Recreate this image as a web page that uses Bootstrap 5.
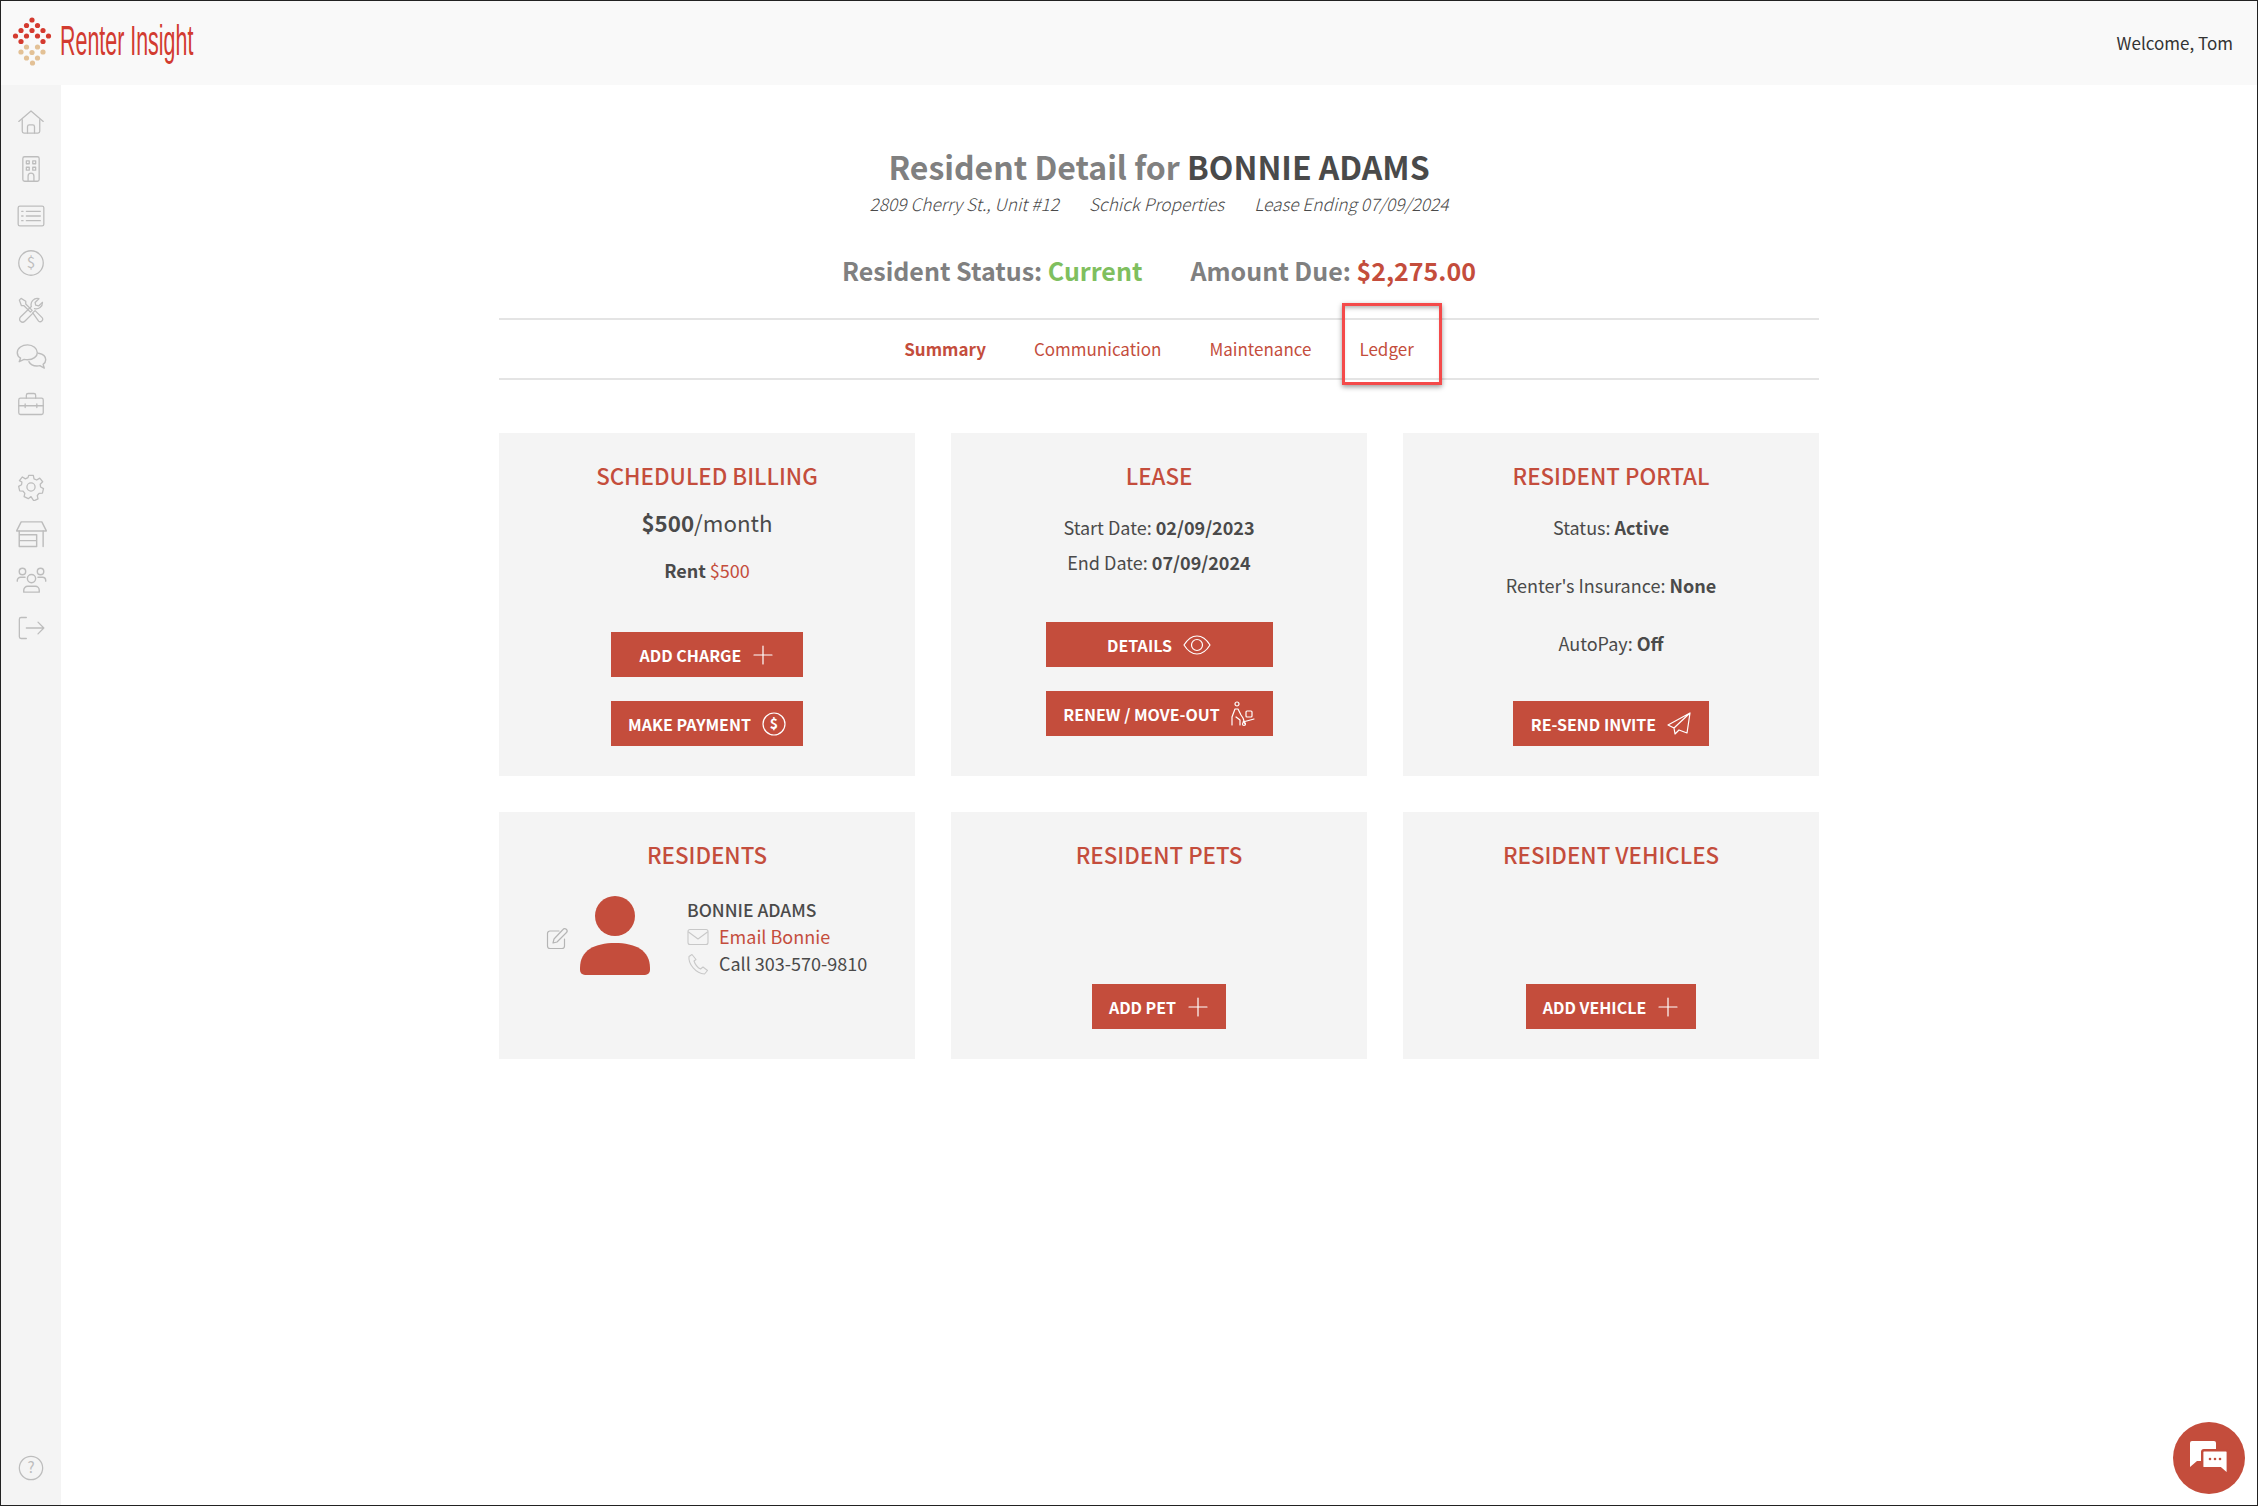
<!DOCTYPE html>
<html lang="en">
<head>
    <meta charset="UTF-8">
    <title>Resident Detail</title>
    <link href="https://cdn.jsdelivr.net/npm/bootstrap@5.3.0/dist/css/bootstrap.min.css" rel="stylesheet">
    <style>
        html, body { height: 100%; }
        body { font-family: "Noto Sans CJK SC", "Noto Sans", sans-serif; color: #4a4a4a; background: #fff; overflow: hidden; }
        .app-frame { height: 1506px; border: 1px solid #222; position: relative; display: flex; flex-direction: column; }
        .top-bar { height: 84px; background: #f9f9f9; padding: 0 24px 4px 11px; flex: none; }
        .logo-text { font-family: "Liberation Sans", sans-serif; font-size: 42px; line-height: 1; color: #d23b30; transform: scaleX(.51); transform-origin: left center; white-space: nowrap; margin-left: 8px; width: 134px; }
        .welcome { font-size: 17px; color: #333; margin-top: 4px; }
        .side-bar { width: 60px; background: #f4f4f4; flex: none; padding-top: 13px; }
        .side-item { height: 47px; display: flex; align-items: center; justify-content: center; }
        .side-gap { height: 36px; }
        .side-bar svg { width: 28px; height: 28px; fill: none; stroke: #bdbdbd; stroke-width: 1.1; stroke-linecap: round; stroke-linejoin: round; }
        .side-bar svg.wide-ico { width: 31px; height: 31px; }
        .help-item { margin-bottom: 14px; }
        .page-body { width: 1320px; margin: 0 auto; padding-top: 58px; }
        .page-title { font-size: 32px; line-height: 46px; font-weight: 600; color: #808080; margin: 0; }
        .page-title b { color: #4a4a4a; font-weight: 700; }
        .sub-info { font-size: 17.300px; font-style: italic; font-weight: 300; line-height: 26px; margin-top: 2px; color: #4a4a4a; gap: 30px; }
        .status-row { font-size: 25px; line-height: 38px; font-weight: 600; color: #808080; margin-top: 34px; gap: 48px; }
        .txt-green { color: #7fbf5f; }
        .txt-red { color: #c44d3c; }
        .tab-bar { margin-top: 29px; border-top: 2px solid #e4e4e4; border-bottom: 2px solid #e4e4e4; height: 62px; }
        .tab-bar .nav-link { color: #c44d3c; font-size: 17px; line-height: 58px; padding: 0 24px; }
        .tab-bar .nav-link.active { font-weight: 700; }
        .note-box { position: absolute; left: 7px; right: -4px; top: -17px; bottom: -7px; border: 3px solid #f44a4a; box-shadow: 0 2px 5px rgba(0,0,0,.4), inset 0 4px 4px -2px rgba(0,0,0,.3); pointer-events: none; }
        .card-grid { --bs-gutter-x: 36px; --bs-gutter-y: 36px; margin-top: 17px; }
        .info-card { background: #f4f4f4; height: 100%; min-height: 343px; padding: 25px 10px 30px; text-align: center; display: flex; flex-direction: column; align-items: center; }
        .info-card.low-card { min-height: 247px; }
        .card-head { font-size: 22.300px; line-height: 34px; font-weight: 500; color: #c44d3c; margin: 0; text-transform: uppercase; }
        .price-line { font-size: 22.300px; line-height: 34px; margin-top: 13px; }
        .rent-line { font-size: 18px; line-height: 26px; margin-top: 18px; }
        .info-line { font-size: 18px; line-height: 35px; }
        .info-first { margin-top: 18px; }
        .info-line-gap { margin-top: 23px; }
        .info-card b { font-weight: 600; }
        .act-btn { border-radius: 0; border: 0; background: #c44d3c; color: #fff; font-size: 16px; font-weight: 600; height: 45px; padding: 0; display: flex; align-items: center; justify-content: center; gap: 11px; text-transform: uppercase; }
        .act-btn:hover { background: #b24333; color: #fff; }
        .act-btn svg { fill: none; stroke: #fff; stroke-width: 1.2; stroke-linecap: round; stroke-linejoin: round; flex: none; }
        .w-billing { width: 192px; }
        .w-lease { width: 227px; }
        .w-portal { width: 196px; }
        .w-pet { width: 134px; }
        .w-vehicle { width: 170px; }
        .btn-top { margin-top: auto; }
        .btn-next { margin-top: 24px; }
        .lease-end { margin-bottom: 10px; }
        .resident-row { width: 100%; padding-left: 37px; margin-top: 25px; text-align: left; font-size: 18px; line-height: 27px; }
        .edit-ico { width: 22px; height: 22px; margin-top: 32px; margin-right: 12px; fill: none; stroke: #b5b5b5; stroke-width: 1.2; stroke-linecap: round; stroke-linejoin: round; flex: none; }
        .avatar-ico { width: 70px; height: 80px; fill: #c44d3c; flex: none; margin-right: 37px; }
        .contact-ico { width: 22px; height: 22px; margin-right: 10px; fill: none; stroke: #c8c8c8; stroke-width: 1.1; stroke-linecap: round; stroke-linejoin: round; flex: none; }
        .contact-name { font-size: 17.500px; font-weight: 500; }
        .contact-link { color: #c44d3c; text-decoration: none; }
        .chat-bubble { position: absolute; right: 12px; bottom: 11px; width: 72px; height: 72px; border-radius: 50%; background: #c44d3c; display: flex; align-items: center; justify-content: center; }
    </style>
</head>
<body>
    <div class="app-frame">
        <header class="top-bar d-flex align-items-center justify-content-between">
            <div class="d-flex align-items-center">
                <svg width="40" height="50" viewBox="12 15 40 50">
                    <g fill="#d43a2f">
                        <circle cx="32" cy="19" r="2.6"/><circle cx="26.5" cy="24.500" r="2.600"/><circle cx="37.500" cy="24.500" r="2.600"/>
                        <circle cx="21" cy="29.500" r="2.600"/><circle cx="32" cy="29.500" r="2.600"/><circle cx="43" cy="29.500" r="2.600"/>
                        <circle cx="15.500" cy="35" r="2.600"/><circle cx="26.500" cy="35" r="2.600"/><circle cx="37.500" cy="35" r="2.600"/><circle cx="48.500" cy="35" r="2.600"/>
                        <circle cx="21" cy="40.500" r="2.600"/><circle cx="43" cy="40.500" r="2.600"/>
                    </g>
                    <g fill="#e3c196">
                        <circle cx="26.500" cy="46" r="2.600"/><circle cx="37.500" cy="46" r="2.600"/>
                        <circle cx="21" cy="51" r="2.600"/><circle cx="32" cy="51.500" r="2.600"/><circle cx="43" cy="51" r="2.600"/>
                        <circle cx="26.500" cy="57" r="2.600"/><circle cx="37.500" cy="57" r="2.600"/><circle cx="32.500" cy="62" r="2.600"/>
                    </g>
                </svg>
                <div class="logo-text">Renter Insight</div>
            </div>
            <div class="welcome">Welcome, Tom</div>
        </header>
        <div class="d-flex flex-grow-1">
            <nav class="side-bar d-flex flex-column">
                <div class="side-item"><svg viewBox="0 0 24 24"><path d="M1.500 11.500 12 2.500l10.500 9"/><path d="M4.500 10v10a1.500 1.500 0 0 0 1.500 1.500h12a1.500 1.500 0 0 0 1.500-1.500V10"/><path d="M9 21.500V16a1.500 1.500 0 0 1 1.500-1.500h3A1.500 1.500 0 0 1 15 16v5.500"/></svg></div>
                <div class="side-item"><svg viewBox="0 0 24 24"><rect x="5" y="1.500" width="14" height="21" rx="1.500"/><rect x="8" y="5" width="2.500" height="2.500"/><rect x="13.500" y="5" width="2.500" height="2.500"/><rect x="8" y="10.500" width="2.500" height="2.500"/><rect x="13.500" y="10.500" width="2.500" height="2.500"/><path d="M9.500 22.500V18a2.500 2.500 0 0 1 5 0v4.500"/></svg></div>
                <div class="side-item"><svg viewBox="0 0 24 24"><rect x="1" y="3.500" width="22" height="17" rx="1.500"/><path d="M8 8h12M8 12h12M8 16h12M4 8h1.200M4 12h1.200M4 16h1.200"/></svg></div>
                <div class="side-item"><svg viewBox="0 0 24 24"><circle cx="12" cy="12" r="10.500"/><text x="12" y="16.500" text-anchor="middle" font-size="13" fill="#bdbdbd" stroke="none">$</text></svg></div>
                <div class="side-item"><svg viewBox="0 0 24 24"><path d="M2 3.500 3.500 2l4 2.500v2.300l5.500 5.500-1.500 1.500L6 8.300H3.800z"/><path d="m13.500 14.500 2-2 6 6a1.900 1.900 0 0 1 0 2.700l-.3.300a1.900 1.900 0 0 1-2.700 0z"/><path d="M21.800 5.500 18.500 8.500 16 7.800l-.5-2.300L18.800 2.300a5.300 5.300 0 0 0-6.500 6.700L3 18a2.600 2.600 0 0 0 3.700 3.700l7-7"/><path d="M15 10.800a5.300 5.300 0 0 0 6.800-5.300"/></svg></div>
                <div class="side-item"><svg class="wide-ico" viewBox="0 0 24 24"><path d="M9 3C4.800 3 1 5.300 1 9c0 1.800 1 3.300 2.500 4.300L2.500 16l3.800-1.800c.8.200 1.700.3 2.700.3 4.200 0 7.500-2.400 7.500-5.500S13.200 3 9 3z"/><path d="M17.500 9.500c3 .6 5.500 2.500 5.500 5 0 1.500-.8 2.700-2 3.600l.9 2.900-3.400-1.900c-.7.200-1.500.3-2.300.3-2.800 0-5.200-1.300-6.200-3.400"/></svg></div>
                <div class="side-item"><svg viewBox="0 0 24 24"><rect x="1.500" y="7" width="21" height="14" rx="1.500"/><path d="M8 7V4.500A1.500 1.500 0 0 1 9.500 3h5A1.500 1.500 0 0 1 16 4.500V7M1.500 13.500h21M7 12v3M17 12v3"/></svg></div>
                <div class="side-gap"></div>
                <div class="side-item"><svg viewBox="0 0 24 24"><circle cx="12" cy="12" r="3.500"/><path d="M10 2h4l.6 3 2.300 1 2.600-1.600 2.500 3.100-2.100 2.100.3 2.400 2.500 1.400-.9 3.900-2.900.1-1.500 1.900.6 2.900-3.600 1.700L12 20.200 9.700 22l-3.600-1.700.6-2.900-1.500-1.900-2.900-.1-.9-3.900 2.500-1.400.3-2.400L2.100 6.500l2.500-3.100L7.200 5l2.200-1z"/></svg></div>
                <div class="side-item"><svg class="wide-ico" viewBox="0 0 24 24"><path d="M4 3h16l3.500 7H.5z"/><path d="M2.500 10v12M21 10v12M2.500 22H16V13H2.500M2.500 17.500H16"/></svg></div>
                <div class="side-item"><svg class="wide-ico" viewBox="0 0 24 24"><circle cx="12" cy="10.500" r="3.200"/><path d="M6 21v-1.500a3 3 0 0 1 3-3h6a3 3 0 0 1 3 3V21z"/><circle cx="5" cy="5" r="2.500"/><circle cx="19" cy="5" r="2.500"/><path d="M1 12.500V12a2.500 2.500 0 0 1 2.500-2.500H7M23 12.500V12a2.500 2.500 0 0 0-2.500-2.500H17"/></svg></div>
                <div class="side-item"><svg viewBox="0 0 24 24"><path d="M8 3H3.500A1.500 1.500 0 0 0 2 4.500v15A1.500 1.500 0 0 0 3.500 21H8"/><path d="M8 12h15M18 7l5 5-5 5"/></svg></div>
                <div class="side-item mt-auto help-item"><svg viewBox="0 0 24 24"><circle cx="12" cy="12" r="10"/><text x="12" y="16.500" text-anchor="middle" font-size="13" fill="#bdbdbd" stroke="none">?</text></svg></div>
            </nav>
            <main class="flex-grow-1">
                <div class="page-body">
                    <div class="text-center">
                        <h1 class="page-title">Resident Detail for <b>BONNIE ADAMS</b></h1>
                        <div class="sub-info d-flex justify-content-center">
                            <span>2809 Cherry St., Unit #12</span>
                            <span>Schick Properties</span>
                            <span>Lease Ending 07/09/2024</span>
                        </div>
                        <div class="status-row d-flex justify-content-center">
                            <span>Resident Status: <span class="txt-green">Current</span></span>
                            <span>Amount Due: <span class="txt-red">$2,275.00</span></span>
                        </div>
                    </div>

                    <ul class="nav justify-content-center tab-bar">
                        <li class="nav-item"><a class="nav-link active" href="#">Summary</a></li>
                        <li class="nav-item"><a class="nav-link" href="#">Communication</a></li>
                        <li class="nav-item"><a class="nav-link" href="#">Maintenance</a></li>
                        <li class="nav-item position-relative"><a class="nav-link" href="#">Ledger</a><span class="note-box"></span></li>
                    </ul>

                    <div class="row card-grid">
                        <div class="col-4">
                            <div class="info-card">
                                <h2 class="card-head">Scheduled Billing</h2>
                                <div class="price-line"><b>$500</b>/month</div>
                                <div class="rent-line"><b>Rent</b> <span class="txt-red">$500</span></div>
                                <a href="#" class="btn act-btn w-billing btn-top">Add Charge
                                    <svg width="22" height="22" viewBox="0 0 22 22"><path d="M11 2v18M2 11h18"/></svg></a>
                                <a href="#" class="btn act-btn w-billing btn-next">Make Payment
                                    <svg width="24" height="24" viewBox="0 0 24 24"><circle cx="12" cy="12" r="11"/><text x="12" y="17" text-anchor="middle" font-size="14" fill="#fff" stroke="none">$</text></svg></a>
                            </div>
                        </div>
                        <div class="col-4">
                            <div class="info-card">
                                <h2 class="card-head">Lease</h2>
                                <div class="info-line info-first">Start Date: <b>02/09/2023</b></div>
                                <div class="info-line">End Date: <b>07/09/2024</b></div>
                                <a href="#" class="btn act-btn w-lease btn-top">Details
                                    <svg width="28" height="22" viewBox="0 0 28 22"><path d="M1 11C5 4.500 9 2 14 2s9 2.500 13 9c-4 6.500-8 9-13 9S5 17.500 1 11z"/><circle cx="14" cy="11" r="5.500"/></svg></a>
                                <a href="#" class="btn act-btn w-lease btn-next lease-end">Renew / Move-Out
                                    <svg width="24" height="26" viewBox="0 0 24 26"><circle cx="6" cy="3" r="2"/><path d="M1 24v-8l3-8h3l3 6 2 3M5 16l4 3v5M12 21l11-3M12 17l2 6"/><rect x="15" y="10" width="6" height="6" rx="1"/><circle cx="13" cy="23" r="1.500"/></svg></a>
                            </div>
                        </div>
                        <div class="col-4">
                            <div class="info-card">
                                <h2 class="card-head">Resident Portal</h2>
                                <div class="info-line info-first">Status: <b>Active</b></div>
                                <div class="info-line info-line-gap">Renter's Insurance: <b>None</b></div>
                                <div class="info-line info-line-gap">AutoPay: <b>Off</b></div>
                                <a href="#" class="btn act-btn w-portal btn-top">Re-send Invite
                                    <svg width="24" height="24" viewBox="0 0 24 24"><path d="M23 1 1 13l6 3zM23 1 7 16l1 6 4-4M23 1l-3 20-8-3"/></svg></a>
                            </div>
                        </div>
                        <div class="col-4">
                            <div class="info-card low-card">
                                <h2 class="card-head">Residents</h2>
                                <div class="resident-row d-flex">
                                    <svg class="edit-ico" viewBox="0 0 22 22"><path d="M13 3H4a2.500 2.500 0 0 0-2.500 2.500V18A2.500 2.500 0 0 0 4 20.500h12a2.500 2.500 0 0 0 2.500-2.500v-7"/><path d="m8 11 9-9.500a2 2 0 0 1 3.500 3L11 14l-4 1z"/></svg>
                                    <svg class="avatar-ico" viewBox="0 0 70 80"><circle cx="35" cy="20" r="20"/><path d="M0 72C0 54 15 47 35 47s35 7 35 25v2a5 5 0 0 1-5 5H5a5 5 0 0 1-5-5z"/></svg>
                                    <div>
                                        <div class="contact-name">BONNIE ADAMS</div>
                                        <div class="d-flex align-items-center"><svg class="contact-ico" viewBox="0 0 22 22"><rect x="1" y="3.500" width="20" height="15" rx="2"/><path d="m1.500 6 9.500 7 9.500-7"/></svg><a class="contact-link" href="#">Email Bonnie</a></div>
                                        <div class="d-flex align-items-center"><svg class="contact-ico" viewBox="0 0 22 22"><path d="M5 1.500 2 3.500C1 11 9 20.500 17.500 21l3-3.500-4.500-3.500-2.500 2c-3-1.500-5.500-5-6.500-8L9 6.500z"/></svg><span>Call 303-570-9810</span></div>
                                    </div>
                                </div>
                            </div>
                        </div>
                        <div class="col-4">
                            <div class="info-card low-card">
                                <h2 class="card-head">Resident Pets</h2>
                                <a href="#" class="btn act-btn w-pet btn-top">Add Pet
                                    <svg width="22" height="22" viewBox="0 0 22 22"><path d="M11 2v18M2 11h18"/></svg></a>
                            </div>
                        </div>
                        <div class="col-4">
                            <div class="info-card low-card">
                                <h2 class="card-head">Resident Vehicles</h2>
                                <a href="#" class="btn act-btn w-vehicle btn-top">Add Vehicle
                                    <svg width="22" height="22" viewBox="0 0 22 22"><path d="M11 2v18M2 11h18"/></svg></a>
                            </div>
                        </div>
                    </div>
                </div>
            </main>
        </div>
        <div class="chat-bubble">
            <svg width="38" height="34" viewBox="0 0 38 34">
                <path d="M2 0h22a2 2 0 0 1 2 2v6H14a3 3 0 0 0-3 3v9H7l-7 6V2a2 2 0 0 1 2-2z" fill="#fff"/>
                <path d="M14 9.500h22a1.500 1.500 0 0 1 1.500 1.500v22l-7-6H14a1.500 1.500 0 0 1-1.500-1.500V11A1.500 1.500 0 0 1 14 9.500z" fill="#fff" stroke="#c44d3c" stroke-width="1.800"/>
                <circle cx="20" cy="18" r="1.300" fill="#c44d3c"/><circle cx="25" cy="18" r="1.300" fill="#c44d3c"/><circle cx="30" cy="18" r="1.300" fill="#c44d3c"/>
            </svg>
        </div>
    </div>
    <script src="https://cdn.jsdelivr.net/npm/bootstrap@5.3.0/dist/js/bootstrap.bundle.min.js"></script>
</body>
</html>
